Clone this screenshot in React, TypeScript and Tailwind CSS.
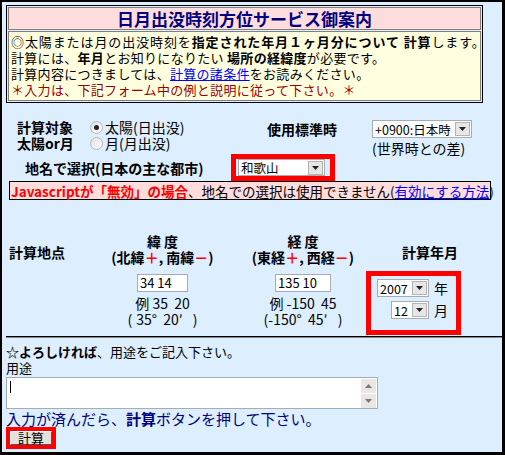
import React from "react";

function Select({ value, w, h = "h-[18px]" }: { value: string; w: string; h?: string }) {
  return (
    <div className={`flex items-center border border-[#a5acb2] bg-white ${w} ${h}`}>
      <span className="flex-1 overflow-hidden whitespace-nowrap pl-[2px] text-[12.5px] leading-[15px]">{value}</span>
      <span className="mr-[1px] flex h-[14px] w-[15px] shrink-0 items-center justify-center border border-[#b4b4b4] bg-[#e6e6e6]">
        <svg width="7" height="4" viewBox="0 0 7 4">
          <path d="M0 0h7L3.5 4z" fill="#222" />
        </svg>
      </span>
    </div>
  );
}

function Radio({ checked }: { checked?: boolean }) {
  return (
    <span className="mr-[1px] flex h-[13px] w-[13px] items-center justify-center rounded-full border border-[#b8b8b8] bg-gradient-to-br from-[#e0e0e0] to-white">
      {checked && <span className="h-[5px] w-[5px] rounded-full bg-[#222]" />}
    </span>
  );
}

export default function App() {
  return (
    <div className="h-[455px] w-[505px] bg-black pb-[3px] pl-[2px] pr-[3px] pt-[2px] font-['Noto_Sans_CJK_JP',sans-serif]">
      <div className="h-full overflow-hidden bg-[#ddeeff] text-[13px] leading-[16px] text-black">
        {/* Intro box */}
        <div className="ml-[4px] mt-[3px] w-[477px] border border-black p-[1px]">
          <div className="flex h-[23px] items-center justify-center border border-[#808080] bg-[#ffdddd] text-[17px] font-bold text-[#000080]">
            日月出没時刻方位サービス御案内
          </div>
          <div className="mt-[1px] h-[70px] border border-[#808080] bg-[#ffffe0] px-[2px] pt-[2px] tracking-[0.3px] whitespace-nowrap">
            <div className="tracking-[0.9px]">
              ◎太陽または月の出没時刻を<b>指定された年月１ヶ月分について 計算</b>します。
            </div>
            <div>
              計算には、<b>年月</b>とお知りになりたい <b>場所の経緯度</b>が必要です。
            </div>
            <div>
              計算内容につきましては、<span className="text-[#0000ff] underline">計算の諸条件</span>をお読みください。
            </div>
            <div className="text-[#990000]">＊入力は、下記フォーム中の例と説明に従って下さい。＊</div>
          </div>
        </div>

        {/* Target / timezone */}
        <div className="mt-[16px] flex h-[35px]">
          <div className="w-[88px] pl-[15px] text-[14px] font-bold">
            <div>計算対象</div>
            <div>太陽or月</div>
          </div>
          <div className="w-[177px] text-[14px]">
            <div className="flex h-[16px] items-center gap-[1px]">
              <Radio checked />
              太陽(日出没)
            </div>
            <div className="flex h-[16px] items-center gap-[1px]">
              <Radio />
              月(月出没)
            </div>
          </div>
          <div className="w-[105px] pt-[2px] text-[14px] font-bold">使用標準時</div>
          <div className="pt-[1px]">
            <Select value="+0900:日本時" w="w-[100px]" />
            <div className="mt-[2px] text-[14px]">(世界時との差)</div>
          </div>
        </div>

        {/* City select */}
        <div className="flex h-[27px] items-center">
          <div className="w-[229px] pl-[23px] text-[14px] font-bold">地名で選択(日本の主な都市)</div>
          <div className="border-[5px] border-[#ff0000] pl-[2px] pr-[5px]">
            <Select value="和歌山" w="w-[87px]" h="h-[17px]" />
          </div>
        </div>
        <div className="ml-[7px] flex h-[19px] w-[482px] items-center whitespace-nowrap border border-black bg-[#ffdddd] pl-[1px] text-[13.5px]">
          <b className="text-[#ff0000]">Javascriptが「無効」の場合</b>、地名での選択は使用できません(
          <span className="text-[#0000ff] underline">有効にする方法</span>)
        </div>

        {/* Location & date */}
        <div className="mt-[31px] flex h-[36px] items-center text-[14px] font-bold">
          <div className="w-[93px] pl-[7px] pt-[6px]">計算地点</div>
          <div className="w-[135px] text-center">
            <div>緯 度</div>
            <div>
              (北緯<span className="text-[#ff0000]">＋</span>, 南緯<span className="text-[#ff0000]">－</span>)
            </div>
          </div>
          <div className="ml-[10px] w-[126px] text-center">
            <div>経 度</div>
            <div>
              (東経<span className="text-[#ff0000]">＋</span>, 西経<span className="text-[#ff0000]">－</span>)
            </div>
          </div>
          <div className="w-[134px] pl-[36px] pt-[6px]">計算年月</div>
        </div>
        <div className="mt-[4px] flex">
          <div className="w-[93px]" />
          <div className="flex w-[135px] flex-col items-center pt-[3px] text-[14px]">
            <div className="flex h-[18px] w-[51px] items-center border border-[#a5acb2] bg-white pl-[2px] text-[13px]">34 14</div>
            <div className="mt-[3px]">例 35&nbsp;&nbsp;20</div>
            <div className="whitespace-nowrap">
              <span className="pr-[4px]">(</span>35°&nbsp;&nbsp;20′&nbsp;&nbsp;<span className="pl-[4px]">)</span>
            </div>
          </div>
          <div className="ml-[10px] flex w-[126px] flex-col items-center pt-[3px] text-[14px]">
            <div className="flex h-[18px] w-[56px] items-center border border-[#a5acb2] bg-white pl-[2px] text-[13px]">135 10</div>
            <div className="mt-[3px]">例 -150&nbsp;&nbsp;45</div>
            <div className="whitespace-nowrap">
              (-150°&nbsp;&nbsp;45′&nbsp;&nbsp;<span className="pl-[4px]">)</span>
            </div>
          </div>
          <div className="h-[64px] w-[95px] border-[5px] border-[#ff0000] pl-[6px] pt-[3px] text-[14px]">
            <div className="flex items-center gap-[5px]">
              <Select value="2007" w="w-[52px]" />
              年
            </div>
            <div className="ml-[14px] mt-[4px] flex items-center gap-[5px]">
              <Select value="12" w="w-[38px]" />
              月
            </div>
          </div>
        </div>

        {/* Divider */}
        <div className="ml-[4px] mt-[1px] h-[2px] border-b border-t border-b-[#888] border-t-black" />

        {/* Purpose */}
        <div className="px-[4px] pt-[6px]">
          <div className="whitespace-nowrap text-[13px]">
            <b>☆よろしければ</b>、用途をご記入下さい。
          </div>
          <div className="text-[13px]">用途</div>
          <div className="relative mt-[1px] h-[32px] w-[372px] border border-[#a5acb2] bg-white">
            <div className="absolute left-[3px] top-[3px] h-[12px] w-[1px] bg-black" />
            <div className="absolute right-[1px] top-[1px] flex flex-col gap-[1px]">
              <div className="flex h-[14px] w-[15px] items-center justify-center bg-[#eae6e6]">
                <svg width="7" height="4" viewBox="0 0 7 4">
                  <path d="M3.5 0L7 4H0z" fill="#777" />
                </svg>
              </div>
              <div className="flex h-[14px] w-[15px] items-center justify-center bg-[#eae6e6]">
                <svg width="7" height="4" viewBox="0 0 7 4">
                  <path d="M0 0h7L3.5 4z" fill="#777" />
                </svg>
              </div>
            </div>
          </div>
          <div className="mt-[1px] whitespace-nowrap text-[15px] leading-[17px] text-[#000080]">
            入力が済んだら、<b>計算</b>ボタンを押して下さい。
          </div>
          <div className="inline-block border-[4px] border-[#ff0000]">
            <div className="flex h-[14px] w-[42px] items-center justify-center border border-b-[#555] border-l-white border-r-[#555] border-t-white bg-[#e4e2dc] text-[13px]">
              計算
            </div>
          </div>
        </div>
      </div>
    </div>
  );
}
